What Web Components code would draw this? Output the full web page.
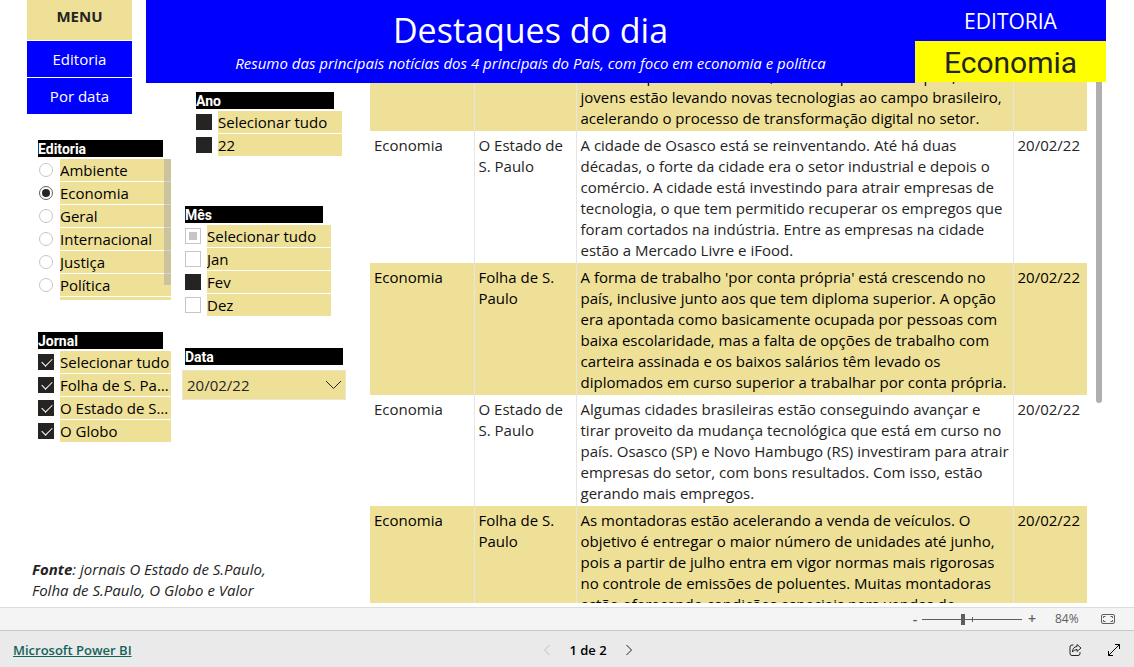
<!DOCTYPE html>
<html lang="pt-BR">
<head>
<meta charset="utf-8">
<meta name="viewport" content="width=device-width, initial-scale=1">
<title>Destaques do dia</title>
<style>
  :root {
    --sand: #efe098;
    --blue: #0000ff;
    --ink: #252423;
    --display: Roboto, "Liberation Sans", sans-serif;
  }
  body { margin: 0; font: 15px/21px "Open Sans", "Noto Sans", sans-serif; color: var(--ink); background: #fff; }
</style>
</head>
<body>
<report-app></report-app>

<script>
class Base extends HTMLElement {
  connectedCallback() {
    if (this.shadowRoot) return;
    const root = this.attachShadow({ mode: 'open' });
    const t = document.createElement('template');
    t.innerHTML = '<style>*{box-sizing:border-box}' + this.css() + '</style>' + this.html();
    root.append(t.content.cloneNode(true));
  }
}

class PageMenu extends Base {
  css() { return `
    :host { display: block; width: 105px; }
    nav { display: flex; flex-direction: column; gap: 1px; text-align: center; }
    strong { height: 40px; line-height: 32px; background: var(--sand); font-size: 15px; font-weight: 700; }
    button { height: 36px; padding: 0; border: 0; background: var(--blue); color: #fff; font: inherit; }`; }
  html() { return `<nav aria-label="Menu"><strong>MENU</strong>
    <button type="button">Editoria</button><button type="button">Por data</button></nav>`; }
}

class ReportHeader extends Base {
  css() { return `
    :host { display: flex; align-items: flex-start; }
    .title { flex: 1; height: 83px; background: var(--blue); color: #fff; text-align: center; white-space: nowrap; }
    h1 { margin: 0; padding-top: 8px; font-size: 34px; line-height: 44px; font-weight: 400; }
    p { margin: 0; font-size: 15px; line-height: 22px; font-style: italic; }
    .card { width: 191px; text-align: center; }
    .label { height: 41px; line-height: 42px; font-size: 21px; background: var(--blue); color: #fff; }
    .value { height: 41px; line-height: 44px; font-family: var(--display); font-size: 30px; background: #ffff00; }`; }
  html() { return `<div class="title"><h1>Destaques do dia</h1>
    <p>Resumo das principais notícias dos 4 principais do Pais, com foco em economia e política</p></div>
    <div class="card"><div class="label">EDITORIA</div><div class="value">Economia</div></div>`; }
}

class SlicerBox extends Base {
  css() { return `
    :host { display: block; }
    h2 { margin: 0 8px 2px 0; height: 17px; background: #000; color: #fff;
      font: 700 14px/18px var(--display); }
    .list { position: relative; display: flex; flex-direction: column; gap: 1px; overflow: hidden; }
    :host([scroll]) .list { height: 141px; }
    :host([scroll]) .list::after { content: ""; position: absolute; right: 0; top: 0; width: 7px; height: 126px;
      background: rgba(160,160,160,.45); }`; }
  html() { return `<section><h2>${this.getAttribute('heading')}</h2><div class="list"><slot></slot></div></section>`; }
}

class SlicerItem extends Base {
  css() { return `
    :host { display: block; flex: none; }
    label { display: flex; align-items: center; height: 22px; }
    input { appearance: none; flex: none; margin: 0 6px 0 0; width: 16px; height: 16px; position: relative;
      border: 1px solid #c8c6c4; background: #fff; }
    input::after { content: ""; position: absolute; }
    span { flex: 1; height: 22px; line-height: 22px; background: var(--sand); color: #000;
      overflow: hidden; text-overflow: ellipsis; white-space: nowrap; }
    input[type=checkbox]:checked { background: var(--ink); border-color: var(--ink); }
    :host([tick]) input::after { left: 5px; top: 1px; width: 5px; height: 9px;
      border: solid #fff; border-width: 0 1px 1px 0; transform: rotate(45deg); }
    :host([partial]) input::after { inset: 3px; background: #c8c6c4; }
    input[type=radio] { width: 14px; height: 14px; margin: 0 7px 0 1px; border-radius: 50%; }
    input[type=radio]:checked { border-color: #605e5c; }
    input[type=radio]:checked::after { inset: 2px; border-radius: 50%; background: var(--ink); }`; }
  html() {
    const radio = this.hasAttribute('radio');
    return `<label><input type="${radio ? 'radio' : 'checkbox'}" ${this.hasAttribute('on') ? 'checked' : ''}><span>${this.getAttribute('label')}</span></label>`;
  }
}

class DateSelect extends Base {
  css() { return `
    :host { display: block; }
    label { display: block; margin: 0 3px 5px; height: 17px; background: #000; color: #fff; font: 700 14px/18px var(--display); }
    .box { position: relative; }
    select { appearance: none; display: block; width: 100%; height: 30px; padding: 0 4px; border: 1px solid #ece6cd; border-radius: 0;
      background: var(--sand); color: var(--ink); font: inherit; }
    svg { position: absolute; right: 4px; top: 10px; pointer-events: none; }`; }
  html() { return `<label for="d">Data</label><div class="box"><select id="d"><option>20/02/22</option></select>
    <svg width="17" height="10" viewBox="0 0 17 10" fill="none" stroke="#252423"><path d="M1 1l7.500 7.500L16 1"/></svg></div>`; }
}

class NewsTable extends Base {
  css() { return `
    :host { display: flex; align-items: flex-start; gap: 9px; overflow: hidden; }
    table { flex: 1; border-collapse: collapse; table-layout: fixed; }
    td { padding: 4px 0 2px 4px; vertical-align: top; border-right: 1px solid #e6e6e6; }
    td:last-child { border-right: 0; }
    tr:nth-child(odd) { background: var(--sand); color: #000; }
    .thumb { width: 6px; height: 341px; border-radius: 3px; background: #b0afae; }`; }
  html() {
    const rows = [
      ['', '', 'Filhos de produtores rurais, em toda parte deste país, os jovens estão levando novas tecnologias ao campo brasileiro, acelerando o processo de transformação digital no setor.', ''],
      ['Economia', 'O Estado de S. Paulo', 'A cidade de Osasco está se reinventando. Até há duas décadas, o forte da cidade era o setor industrial e depois o comércio. A cidade está investindo para atrair empresas de tecnologia, o que tem permitido recuperar os empregos que foram cortados na indústria. Entre as empresas na cidade estão a Mercado Livre e iFood.', '20/02/22'],
      ['Economia', 'Folha de S. Paulo', "A forma de trabalho 'por conta própria' está crescendo no país, inclusive junto aos que tem diploma superior. A opção era apontada como basicamente ocupada por pessoas com baixa escolaridade, mas a falta de opções de trabalho com carteira assinada e os baixos salários têm levado os diplomados em curso superior a trabalhar por conta própria.", '20/02/22'],
      ['Economia', 'O Estado de S. Paulo', 'Algumas cidades brasileiras estão conseguindo avançar e tirar proveito da mudança tecnológica que está em curso no país. Osasco (SP) e Novo Hambugo (RS) investiram para atrair empresas do setor, com bons resultados. Com isso, estão gerando mais empregos.', '20/02/22'],
      ['Economia', 'Folha de S. Paulo', 'As montadoras estão acelerando a venda de veículos. O objetivo é entregar o maior número de unidades até junho, pois a partir de julho entra em vigor normas mais rigorosas no controle de emissões de poluentes. Muitas montadoras estão oferecendo condições especiais para vendas de', '20/02/22'],
    ];
    return `<table aria-label="Notícias"><colgroup><col style="width:104px"><col style="width:102px"><col><col style="width:74px"></colgroup><tbody>${
      rows.map(r => `<tr>${r.map(c => `<td>${c}</td>`).join('')}</tr>`).join('')}</tbody></table><div class="thumb"></div>`;
  }
}

class ZoomBar extends Base {
  css() { return `
    :host { display: flex; justify-content: flex-end; align-items: center; height: 23px; padding: 0 18px 0 0; box-sizing: border-box;
      background: #f4f4f4; border-top: 1px solid #dcdcdc; color: #605e5c; font-size: 12px; line-height: 16px; }
    button { padding: 0; border: 0; background: none; color: inherit; font: 600 14px/16px "Open Sans", sans-serif; width: 10px; }
    input { appearance: none; width: 100px; height: 12px; margin: 0 5px 0 2px;
      background: linear-gradient(#605e5c,#605e5c) 0 6px/100% 1px no-repeat, linear-gradient(#605e5c,#605e5c) 50px 4px/1px 5px no-repeat; }
    input::-webkit-slider-thumb { appearance: none; width: 4px; height: 11px; background: #605e5c; }
    output { width: 24px; margin: 0 21px 0 18px; white-space: nowrap; }
    .fit { width: 16px; height: 14px; }
    svg { display: block; }`; }
  html() { return `<button type="button" aria-label="Reduzir">-</button>
    <input type="range" min="10" max="190" value="84" aria-label="Zoom">
    <button type="button" aria-label="Ampliar">+</button><output>84%</output>
    <button class="fit" type="button" aria-label="Ajustar à página"><svg width="16" height="14" viewBox="0 0 16 14" fill="none" stroke="#605e5c">
      <rect x="1.500" y="2.500" width="13" height="9" rx="1.500"/><path d="M3.500 6V4.500H5.500M10.500 4.500H12.500V6M12.500 8V9.500H10.500M5.500 9.500H3.500V8"/></svg></button>`; }
}

class EmbedFooter extends Base {
  css() { return `
    :host { display: grid; grid-template-columns: 1fr auto 1fr; align-items: center; height: 37px; padding: 2px 13px 0; box-sizing: border-box;
      background: #eaeaea; border-top: 1px solid #c8c8c8; }
    a { color: #12645c; font-size: 13px; font-weight: 600; justify-self: start; }
    .pages { display: flex; align-items: center; gap: 18px; margin-left: 42px; font-size: 13px; font-weight: 600; color: #000; }
    .tools { display: flex; justify-content: flex-end; gap: 24px; }
    button { padding: 0; border: 0; background: none; }
    svg { display: block; fill: none; }
    .pages button { width: 8px; }`; }
  html() { return `<a href="#">Microsoft Power BI</a>
    <div class="pages">
      <button type="button" aria-label="Página anterior" disabled><svg width="8" height="12" viewBox="0 0 8 12" stroke="#bdbdbd"><path d="M6.500 1L1.500 6l5 5"/></svg></button>
      <span>1 de 2</span>
      <button type="button" aria-label="Próxima página"><svg width="8" height="12" viewBox="0 0 8 12" stroke="#252423"><path d="M1.500 1l5 5-5 5"/></svg></button>
    </div>
    <div class="tools">
      <button type="button" aria-label="Compartilhar"><svg width="15" height="14" viewBox="0 0 15 14" stroke="#252423" stroke-linejoin="round">
        <path d="M5.500 2H4Q2 2 2 4v6.500q0 2 2 2h6q2 0 2-2V9"/><path d="M9 1.500L13 5 9 8.500V6.500Q6 6.500 4.500 9 4.500 4 9 3.500z"/></svg></button>
      <button type="button" aria-label="Tela inteira"><svg width="14" height="14" viewBox="0 0 14 14" stroke="#000"><path d="M1.500 12.500l11-11M8 1.500h4.500V6M1.500 8v4.500H6"/></svg></button>
    </div>`; }
}

class ReportApp extends Base {
  css() { return `
    :host { display: flex; flex-direction: column; height: 100vh; overflow: hidden; }
    main { flex: 1; min-height: 0; display: grid; grid-template-columns: 146px 36px 188px minmax(0,1fr);
      grid-template-rows: 83px minmax(0,1fr); overflow: hidden; }
    report-header { grid-area: 1 / 2 / 2 / 5; margin-right: 28px; z-index: 1; }
    .left { grid-area: 1 / 1 / 3 / 3; display: flex; flex-direction: column; padding-left: 38px; z-index: 2; pointer-events: none; }
    .left > * { pointer-events: auto; width: 133px; }
    .left page-menu { width: 105px; margin: 0 0 26px -11px; }
    .jornal { margin-top: 32px; }
    .mid { grid-area: 2 / 3 / 3 / 4; padding-top: 9px; }
    .ano { width: 146px; margin-left: 14px; }
    .mes { width: 146px; margin: 50px 0 32px 3px; }
    date-select { width: 164px; }
    .source { grid-area: 2 / 1 / 3 / 4; align-self: end; margin: 0; padding: 0 90px 6px 32px; font-style: italic; }
    news-table { grid-area: 1 / 4 / 3 / 5; margin: 62px 32px 4px 0; }`; }
  html() { return `<main>
    <report-header></report-header>
    <div class="left">
      <page-menu></page-menu>
      <slicer-box heading="Editoria" scroll>
        <slicer-item radio label="Ambiente"></slicer-item><slicer-item radio on label="Economia"></slicer-item>
        <slicer-item radio label="Geral"></slicer-item><slicer-item radio label="Internacional"></slicer-item>
        <slicer-item radio label="Justiça"></slicer-item><slicer-item radio label="Política"></slicer-item>
        <slicer-item radio label=""></slicer-item>
      </slicer-box>
      <slicer-box class="jornal" heading="Jornal">
        <slicer-item tick on label="Selecionar tudo"></slicer-item><slicer-item tick on label="Folha de S. Paulo"></slicer-item>
        <slicer-item tick on label="O Estado de S. Paulo"></slicer-item><slicer-item tick on label="O Globo"></slicer-item>
      </slicer-box>
    </div>
    <div class="mid">
      <slicer-box class="ano" heading="Ano">
        <slicer-item on label="Selecionar tudo"></slicer-item><slicer-item on label="22"></slicer-item>
      </slicer-box>
      <slicer-box class="mes" heading="Mês">
        <slicer-item partial label="Selecionar tudo"></slicer-item><slicer-item label="Jan"></slicer-item>
        <slicer-item on label="Fev"></slicer-item><slicer-item label="Dez"></slicer-item>
      </slicer-box>
      <date-select></date-select>
    </div>
    <p class="source"><b>Fonte</b>: jornais O Estado de S.Paulo, Folha de S.Paulo, O Globo e Valor</p>
    <news-table></news-table>
  </main>
  <zoom-bar></zoom-bar>
  <embed-footer></embed-footer>`; }
}

customElements.define('page-menu', PageMenu);
customElements.define('report-header', ReportHeader);
customElements.define('slicer-box', SlicerBox);
customElements.define('slicer-item', SlicerItem);
customElements.define('date-select', DateSelect);
customElements.define('news-table', NewsTable);
customElements.define('zoom-bar', ZoomBar);
customElements.define('embed-footer', EmbedFooter);
customElements.define('report-app', ReportApp);
</script>
</body>
</html>
